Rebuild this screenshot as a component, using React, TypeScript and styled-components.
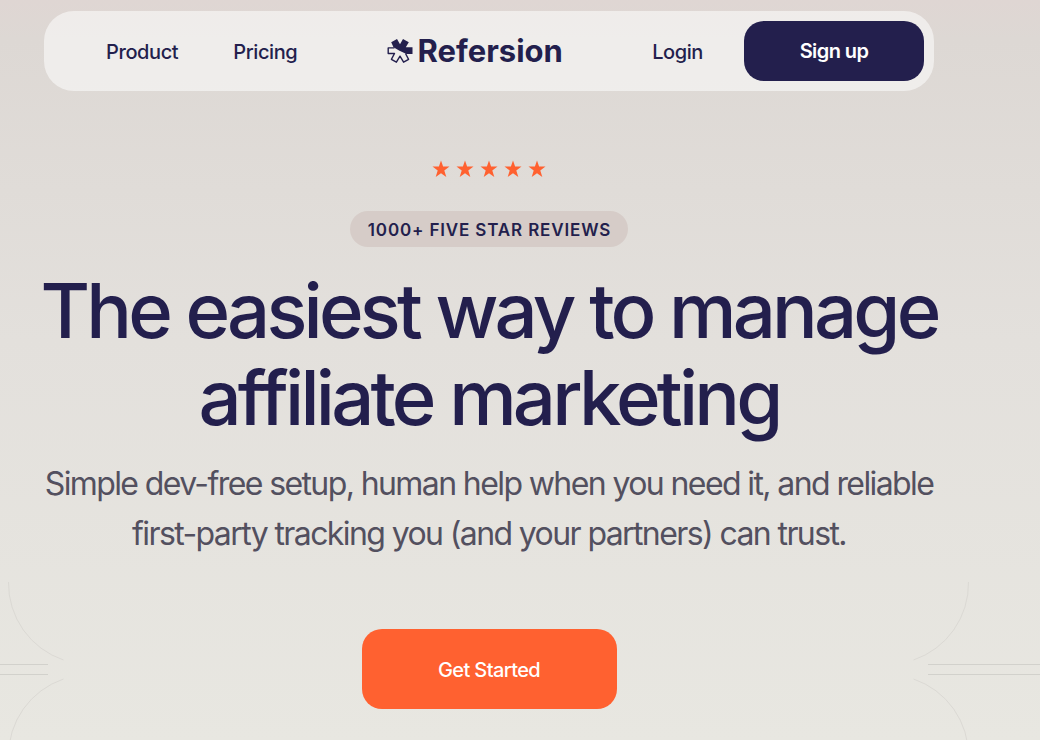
import React from "react";
import styled, { createGlobalStyle } from "styled-components";

const navy = "#231f4d";
const orange = "#ff6130";

const GlobalStyle = createGlobalStyle`
  * { box-sizing: border-box; }
  body {
    margin: 0;
    font-family: Inter, "Liberation Sans", sans-serif;
    color: ${navy};
    background: #e8e7e1;
  }
`;

const Page = styled.div`
  min-height: 100vh;
  padding: 11px 106px 0 44px;
  overflow: hidden;
  background: linear-gradient(#dfd6d3 0, #ddd8d4 40px, #e3e0dc 340px, #e8e7e1 740px);
`;

const NavBar = styled.nav`
  display: flex;
  align-items: center;
  justify-content: space-between;
  height: 80px;
  padding: 0 10px 0 62px;
  border-radius: 30px;
  background: rgba(255, 255, 255, 0.53);
`;

const NavGroup = styled.div<{ $gap: number }>`
  display: flex;
  align-items: center;
  gap: ${(p) => p.$gap}px;
`;

const NavLink = styled.a`
  padding-top: 2px;
  color: ${navy};
  font-size: 20px;
  font-weight: 500;
  line-height: 24px;
  letter-spacing: -0.02em;
  text-decoration: none;
`;

const Brand = styled.a`
  display: flex;
  align-items: center;
  gap: 5px;
  color: ${navy};
  font-size: 31px;
  font-weight: 700;
  line-height: 32px;
  text-decoration: none;
`;

const SignUp = styled.button`
  width: 180px;
  height: 60px;
  border: 0;
  border-radius: 20px;
  background: ${navy};
  color: #fff;
  font: 600 20px/24px Inter, sans-serif;
  letter-spacing: -0.03em;
`;

const Hero = styled.main`
  display: flex;
  flex-direction: column;
  align-items: center;
  padding-top: 69px;
  text-align: center;
`;

const Stars = styled.div`
  display: flex;
  gap: 6px;
  height: 18px;
`;

const Badge = styled.p`
  margin: 33px 0 0;
  padding: 2px 17px 0 18px;
  border-radius: 18px;
  background: #d6ccc8;
  font-size: 17px;
  font-weight: 600;
  line-height: 34px;
  letter-spacing: 0.05em;
`;

const Title = styled.h1`
  margin: 20px -20px 0;
  font-size: 76px;
  font-weight: 500;
  line-height: 87px;
  letter-spacing: -0.05em;
`;

const Lead = styled.p`
  margin: 18px -20px 0;
  color: #53505f;
  font-size: 32px;
  line-height: 50px;
  letter-spacing: -0.05em;
`;

const Action = styled.div`
  position: relative;
  align-self: stretch;
  margin-top: 70px;
  padding-bottom: 31px;
`;

const GetStarted = styled.button`
  position: relative;
  width: 255px;
  height: 80px;
  padding-top: 2px;
  border: 0;
  border-radius: 20px;
  background: ${orange};
  color: #fff;
  font: 500 20px/24px Inter, sans-serif;
  letter-spacing: -0.03em;
`;

const Trace = styled.svg<{ $side: "left" | "right" }>`
  position: absolute;
  top: -49px;
  ${(p) => (p.$side === "left" ? "left: -44px; width: 64px;" : "right: -106px; width: 127px;")}
  height: 160px;
  fill: none;
  stroke-width: 1;
`;

const Star = () => (
  <svg width="18" height="18" viewBox="0 0 18 18" aria-hidden="true">
    <path fill={orange} d="M9 .5l2.100 6H17.500l-5.200 4 2 6.500L9 13.200 3.700 17l2-6.500L.5 6.500H6.900z" />
  </svg>
);

const Mark = () => (
  <svg width="26" height="26" viewBox="0 0 26 26" aria-hidden="true">
    <path
      fill={navy}
      d="M4.200 4.200L10 1 13 6.300 16 1 21.800 4.200 18.800 9.300H25.500V16H19.500L12.500 12.800 6.500 9.300z"
    />
    <path
      fill="none"
      stroke={navy}
      strokeWidth="1.400"
      strokeLinejoin="round"
      d="M7.500 9.900H1.200V15.500H7.500L4.400 21.300 9.400 24.200 13 18.200 16.600 24.200 21.600 21.300 18.500 15.500"
    />
  </svg>
);

export default function App() {
  return (
    <>
      <GlobalStyle />
      <Page>
        <NavBar>
          <NavGroup $gap={55}>
            <NavLink href="#product">Product</NavLink>
            <NavLink href="#pricing">Pricing</NavLink>
          </NavGroup>
          <Brand href="#home">
            <Mark />
            Refersion
          </Brand>
          <NavGroup $gap={41}>
            <NavLink href="#login">Login</NavLink>
            <SignUp type="button">Sign up</SignUp>
          </NavGroup>
        </NavBar>
        <Hero>
          <Stars role="img" aria-label="Five stars">
            {[1, 2, 3, 4, 5].map((n) => (
              <Star key={n} />
            ))}
          </Stars>
          <Badge>1000+ FIVE STAR REVIEWS</Badge>
          <Title>
            The easiest way to manage
            <br />
            affiliate marketing
          </Title>
          <Lead>
            Simple dev-free setup, human help when you need it, and reliable
            <br />
            first-party tracking you (and your partners) can trust.
          </Lead>
          <Action>
            <Trace $side="left" aria-hidden="true">
              <path stroke="#dbd9d4" d="M8.500 2A81 81 0 0 0 63.500 80M63.500 99A81 81 0 0 0 8.500 177" />
              <path stroke="#d2d1cc" d="M0 84.500H48M0 94.500H48" />
            </Trace>
            <Trace $side="right" aria-hidden="true">
              <path stroke="#dbd9d4" d="M55.500 2A81 81 0 0 1 .5 80M.5 99A81 81 0 0 1 55.500 177" />
              <path stroke="#d2d1cc" d="M15 84.500H127M15 94.500H127" />
            </Trace>
            <GetStarted type="button">Get Started</GetStarted>
          </Action>
        </Hero>
      </Page>
    </>
  );
}
